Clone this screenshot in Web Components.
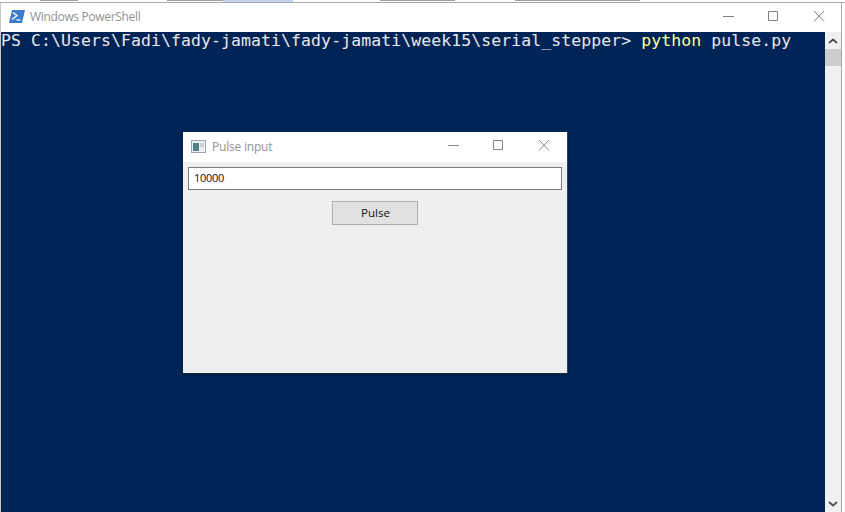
<!DOCTYPE html>
<html>
<head>
<meta charset="utf-8">
<title>Windows PowerShell</title>
<style>
html, body { margin: 0; height: 100%; overflow: hidden; background: #fff; }
</style>
</head>
<body>
<ps-window title="Windows PowerShell">
  <span slot="prompt">PS C:\Users\Fadi\fady-jamati\fady-jamati\week15\serial_stepper&gt; </span>
  <span slot="cmd">python</span>
  <span slot="arg"> pulse.py</span>
  <pulse-dialog title="Pulse input" value="10000" label="Pulse"></pulse-dialog>
</ps-window>
<script>
const captionIcons = `
  <svg width="12" height="12" viewBox="0 0 12 12" fill="none" stroke="currentColor" stroke-width="1">
    <path d="M0 5.5H11"/></svg>
  <svg width="12" height="12" viewBox="0 0 12 12" fill="none" stroke="currentColor" stroke-width="1">
    <path d="M.5 .5H9.5V9.5H.5Z"/></svg>
  <svg width="12" height="12" viewBox="0 0 12 12" fill="none" stroke="currentColor" stroke-width="1">
    <path d="M1 0L11 10.5M11 0L1 10.5"/></svg>`;

class PsWindow extends HTMLElement {
  constructor() {
    super();
    this.shadowDOM = this.attachShadow({mode: "open"});
  }
  connectedCallback() {
    this.shadowDOM.innerHTML = `<style>
:host { display: flex; flex-direction: column; position: relative; width: 845px; height: 512px; overflow: hidden; background: #fff; font-family: "Open Sans", "Noto Sans", sans-serif; }
.strip { height: 3px; flex: none; background: #fff; border-bottom: 1px solid #a9a9a9; box-sizing: border-box; display: flex; align-items: flex-start; }
.strip i { display: block; height: 1px; background: #a0a0a0; flex: none; }
.strip i.sel { height: 2px; background: #c3d4ea; }
.frame { flex: 1; display: flex; flex-direction: column; min-height: 0; margin-right: 3px; border-right: 1px solid #a9a9a9; border-left: 1px solid #c8c8c8; }
.title { height: 29px; flex: none; display: flex; align-items: center; background: #fff; color: #929292; font-size: 12px; letter-spacing: -.33px; padding-bottom: 2px; box-sizing: border-box; }
.title svg.logo { margin-left: 8px; margin-right: 5px; }
.caption { margin-left: auto; display: flex; gap: 33px; padding-right: 16px; color: #7d7d7d; }
.body { flex: 1; display: flex; min-height: 0; }
.console { flex: 1; background: #012456; color: #e8e8ec; font: 16.5px/16px "DejaVu Sans Mono", monospace; letter-spacing: .07px; white-space: pre; padding-top: 1px; }
::slotted([slot="cmd"]) { color: #ffff9e; }
.bar { width: 16px; flex: none; background: #f0f0f0; display: flex; flex-direction: column; align-items: center; color: #505050; }
.bar .btn { height: 17px; display: flex; align-items: center; justify-content: center; flex: none; }
.bar .thumb { width: 100%; height: 17px; background: #cdcdcd; flex: none; }
.bar .track { flex: 1; }
</style>
<div class="strip">
  <i style="margin-left:40px;width:38px"></i>
  <i style="margin-left:89px;width:56px"></i>
  <i class="sel" style="width:70px"></i>
  <i style="margin-left:87px;width:75px"></i>
  <i style="margin-left:60px;width:125px"></i>
</div>
<div class="frame">
  <div class="title">
    <svg class="logo" width="16" height="13" viewBox="0 0 16 13">
      <path d="M3 0H16L13 13H0Z" fill="#3a7bcb"/>
      <path d="M4 2.5L8 5.5L3 9.5" fill="none" stroke="#fff" stroke-width="1.4"/>
      <path d="M7.5 10H11.5" stroke="#fff" stroke-width="1.2"/>
    </svg>
    <span>${this.getAttribute("title")}</span>
    <div class="caption">${captionIcons}</div>
  </div>
  <div class="body">
    <div class="console"><slot name="prompt"></slot><slot name="cmd"></slot><slot name="arg"></slot></div>
    <div class="bar">
      <div class="btn"><svg width="10" height="6" viewBox="0 0 10 6" fill="none" stroke="currentColor" stroke-width="1.8"><path d="M1 5L5 1.5L9 5"/></svg></div>
      <div class="thumb"></div>
      <div class="track"></div>
      <div class="btn"><svg width="10" height="6" viewBox="0 0 10 6" fill="none" stroke="currentColor" stroke-width="1.8"><path d="M1 1L5 4.5L9 1"/></svg></div>
    </div>
  </div>
</div>
<slot></slot>`;
  }
}
customElements.define("ps-window", PsWindow);

class PulseDialog extends HTMLElement {
  constructor() {
    super();
    this.shadowDOM = this.attachShadow({mode: "open"});
  }
  connectedCallback() {
    this.shadowDOM.innerHTML = `<style>
:host { position: absolute; left: 183px; top: 132px; width: 385px; height: 242px; box-sizing: border-box; display: flex; flex-direction: column; background: #efefef; border-right: 1px solid #33415c; border-bottom: 1px solid #1a2a48; box-shadow: 0 1px 2px rgba(0,0,0,.35); font-family: "Open Sans", "Noto Sans", sans-serif; }
.title { height: 30px; flex: none; display: flex; align-items: center; background: #fff; color: #929292; font-size: 12px; letter-spacing: -.2px; padding-bottom: 2px; box-sizing: border-box; }
.title svg.logo { margin-left: 8px; margin-right: 6px; }
.caption { margin-left: auto; display: flex; gap: 33px; padding-right: 17px; color: #858585; }
.content { display: flex; flex-direction: column; align-items: center; padding: 5px 5px 0 5px; }
.input { align-self: stretch; height: 23px; box-sizing: border-box; background: #fff; border: 1px solid #7a7a7a; color: #111; font-size: 11px; letter-spacing: -.3px; line-height: 19px; padding-left: 5px; }
button { margin-top: 11px; width: 86px; height: 24px; background: #e1e1e1; border: 1px solid #adadad; padding: 0 0 2px 1px; color: #111; font: 11.5px "Open Sans", "Noto Sans", sans-serif; }
</style>
<div class="title">
  <svg class="logo" width="15" height="13" viewBox="0 0 15 13">
    <rect x=".5" y=".5" width="14" height="12" fill="#eef1f4" stroke="#9aa6b0"/>
    <rect x="2" y="3" width="6" height="8" fill="#4d8488"/>
    <rect x="9" y="3" width="4" height="4" fill="#c5d0da"/>
  </svg>
  <span>${this.getAttribute("title")}</span>
  <div class="caption">${captionIcons}</div>
</div>
<div class="content">
  <div class="input">${this.getAttribute("value")}</div>
  <button>${this.getAttribute("label")}</button>
</div>`;
  }
}
customElements.define("pulse-dialog", PulseDialog);
</script>
</body>
</html>
